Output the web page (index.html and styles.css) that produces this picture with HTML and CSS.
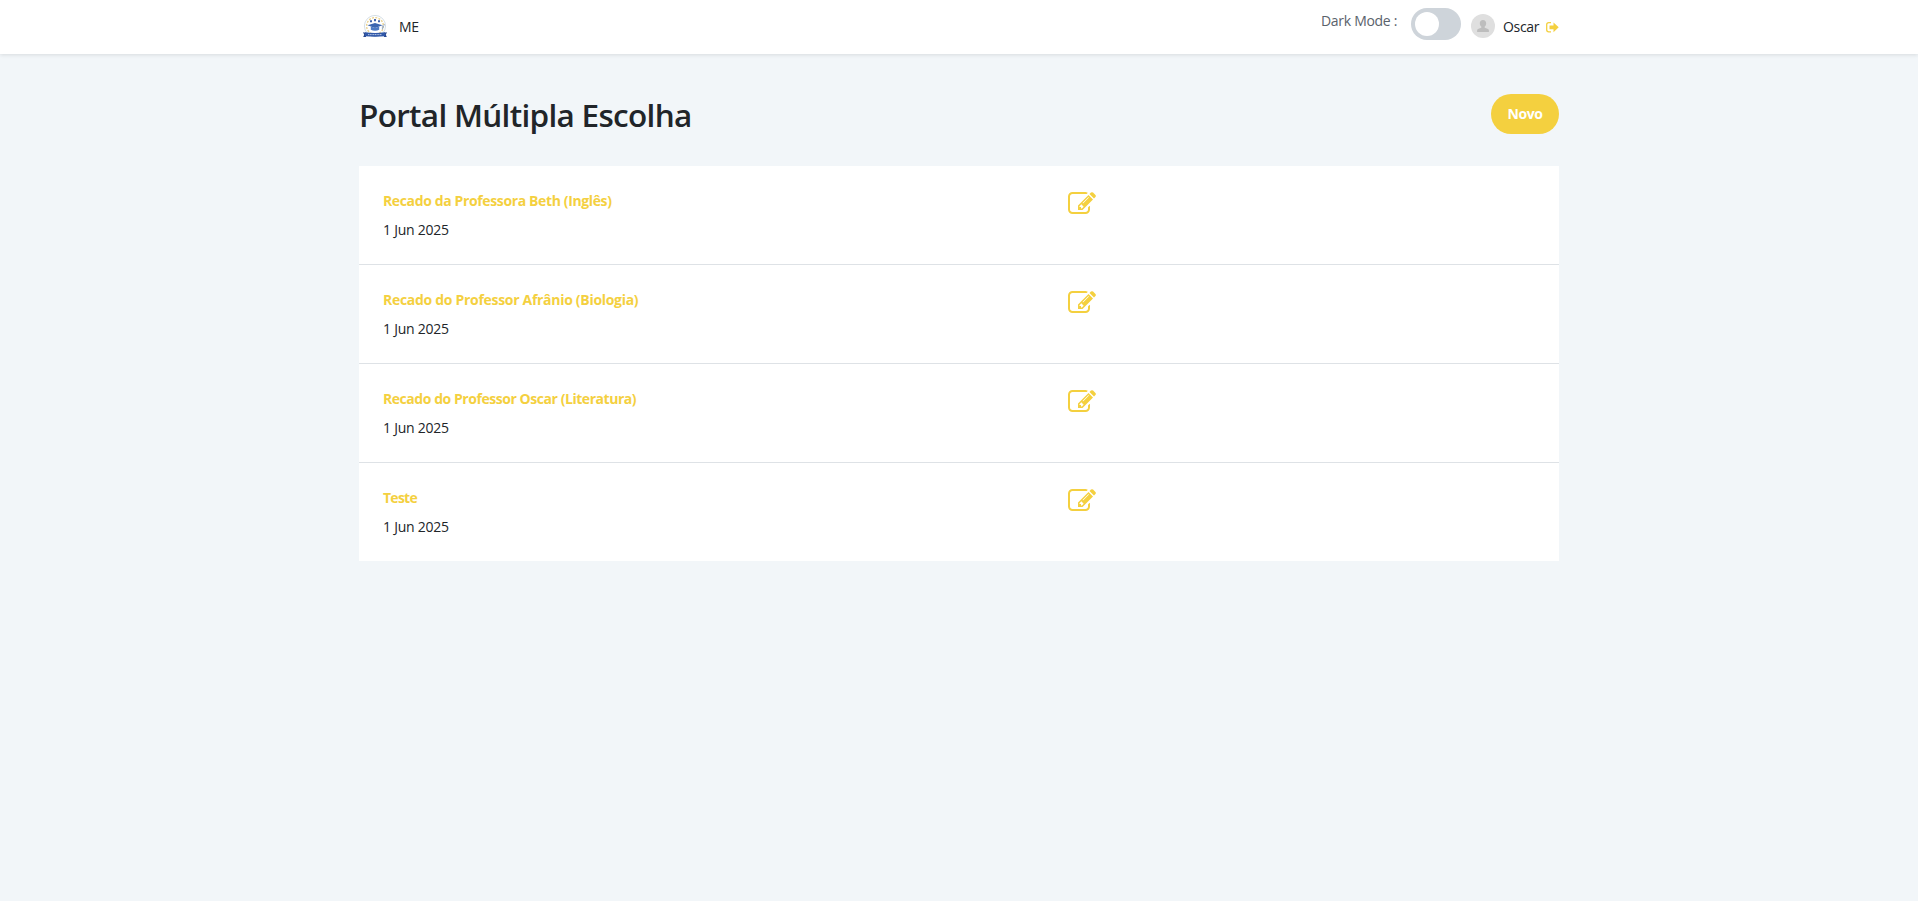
FILE: index.html
```html
<!DOCTYPE html>
<html lang="pt-BR">
<head>
<meta charset="utf-8">
<title>Portal Múltipla Escolha</title>
<link rel="stylesheet" href="styles.css">
</head>
<body>
<svg class="symbols" aria-hidden="true">
  <symbol id="edit" viewBox="0 0 1792 1792"><path d="M888 1184l116-116-152-152-116 116v56h96v96h56zm440-720q-16-16-33 1l-350 350q-17 17-1 33t33-1l350-350q17-17 1-33zm80 594v190q0 119-84.5 203.5t-203.5 84.5h-832q-119 0-203.5-84.5t-84.5-203.5v-832q0-119 84.5-203.5t203.5-84.5h832q63 0 117 25 15 7 18 23 3 17-9 29l-49 49q-14 14-32 8-23-6-45-6h-832q-66 0-113 47t-47 113v832q0 66 47 113t113 47h832q66 0 113-47t47-113v-126q0-13 9-22l64-64q15-15 35-7t20 29zm-96-738l288 288-672 672h-288v-288zm444 132l-92 92-288-288 92-92q28-28 68-28t68 28l152 152q28 28 28 68t-28 68z"/></symbol>
</svg>
<header class="topbar">
  <div class="container topbar-inner">
    <a class="brand">
      <svg class="logo" viewBox="0 0 24 22">
        <circle cx="12" cy="11" r="10.6" fill="#fff" stroke="#c9d6df" stroke-width=".8"/>
        <circle cx="12" cy="11" r="8.4" fill="none" stroke="#ead28f" stroke-width="1.4" stroke-dasharray="2 1.3"/>
        <path d="M4.5 10.2 12 8l7.5 2.2L12 13z" fill="#3c66b0"/>
        <path d="M7.8 11.6v3.2q4.2 2 8.4 0v-3.2L12 13z" fill="#4e7bc4"/>
        <path d="M7 5.2h2v2H7zM11 4h2v2.200h-2zM15 5.200h2v2h-2z" fill="#4265ad"/>
        <path d="M19.400 10.300v4.200M21.500 9l-2 5" stroke="#93a7c4" stroke-width=".8"/>
        <path d="M0 17.200l3 .6V22H.2l1-2.200zM24 17.200l-3 .6V22h2.800l-1-2.200z" fill="#29488e"/>
        <path d="M2 17.200q10 1.400 20 0v4q-10 .9-20 0z" fill="#3158a8"/>
        <path d="M5 19.600h14" stroke="#b7c7e6" stroke-width="1" stroke-dasharray="1.200 .5"/>
      </svg>
      <span class="brand-name">ME</span>
    </a>
    <div class="tools">
      <span class="mode-label">Dark Mode :</span>
      <span class="switch"><span class="knob"></span></span>
      <svg class="avatar" viewBox="0 0 24 24"><circle cx="12" cy="12" r="12" fill="#dfdfdf"/><path d="M12 5.900c-2 0-3.200 1.400-3.200 3.300 0 1.500.6 2.700 1.500 3.400v1.200c-1.600.5-4.200 1-4.200 2.600V18h11.800v-1.600c0-1.600-2.600-2.100-4.200-2.600v-1.200c.9-.7 1.500-1.900 1.500-3.400 0-1.900-1.200-3.300-3.200-3.300z" fill="#bdbdbd"/></svg>
      <span class="user">Oscar</span>
      <svg class="logout" viewBox="0 0 13 11"><path d="M5 .700H2.700Q.700.700.700 2.700v5.100q0 2 2 2H5" fill="none" stroke="#f4d03f" stroke-width="1.300"/><path d="M3.500 3.400h4V.4L12.700 5.300 7.500 10.200v-3h-4z" fill="#f4d03f"/></svg>
    </div>
  </div>
</header>
<main class="container">
  <div class="heading">
    <h1 class="title">Portal Múltipla Escolha</h1>
    <button class="new-btn">Novo</button>
  </div>
  <section class="list">
    <article class="row"><div class="info"><a class="name">Recado da Professora Beth (Inglês)</a><span class="date">1 Jun 2025</span></div><svg class="edit"><use href="#edit"/></svg></article>
    <article class="row"><div class="info"><a class="name name-biology">Recado do Professor Afrânio (Biologia)</a><span class="date">1 Jun 2025</span></div><svg class="edit"><use href="#edit"/></svg></article>
    <article class="row"><div class="info"><a class="name name-literature">Recado do Professor Oscar (Literatura)</a><span class="date">1 Jun 2025</span></div><svg class="edit"><use href="#edit"/></svg></article>
    <article class="row"><div class="info"><a class="name name-short">Teste</a><span class="date">1 Jun 2025</span></div><svg class="edit"><use href="#edit"/></svg></article>
  </section>
</main>
</body>
</html>
```
FILE: styles.css
```css
* { box-sizing: border-box; }
body { margin: 0; min-height: 901px; background: #f2f6f9; color: #212529; font: 14px/20px "Open Sans", "Noto Sans", sans-serif; }
.symbols { display: none; }
.container { width: 1200px; margin: 0 auto; }
.topbar { height: 54px; background: #fff; box-shadow: 0 1px 4px rgba(0,0,0,.11); }
.topbar-inner { display: flex; justify-content: space-between; }
.brand { display: flex; padding: 15px 0 0 4px; }
.logo { width: 24px; height: 22px; }
.brand-name { margin: 2px 0 0 12px; letter-spacing: -.4px; }
.tools { display: flex; align-items: flex-start; }
.mode-label { width: 90px; padding-top: 11px; color: #5a626b; letter-spacing: -.3px; white-space: nowrap; }
.switch { width: 50px; height: 32px; padding: 4px; border-radius: 16px; background: #ced4da; margin-top: 8px; }
.knob { display: block; width: 24px; height: 24px; border-radius: 50%; background: #fff; }
.avatar { width: 24px; height: 24px; margin: 14px 0 0 10px; }
.user { width: 43px; margin: 17px 0 0 8px; letter-spacing: -.3px; }
.logout { width: 13px; height: 11px; margin-top: 22px; }
.heading { display: flex; justify-content: space-between; height: 112px; padding-top: 40px; }
.title { margin: 0; padding-top: 1px; font-size: 31.5px; line-height: 40px; font-weight: 600; letter-spacing: -.7px; white-space: nowrap; }
.new-btn { width: 68px; height: 40px; padding: 0; border: 0; border-radius: 20px; background: #f4d03f; color: #fff; font: 700 14px/20px "Open Sans", sans-serif; letter-spacing: -.4px; }
.list { background: #fff; }
.row { display: flex; height: 99px; padding: 24px; border-bottom: 1px solid #dee2e6; }
.row:last-child { height: 98px; border-bottom: 0; }
.info { display: flex; flex-direction: column; width: 685px; }
.name { color: #f4d03f; font-weight: 700; line-height: 21px; margin-bottom: 8px; letter-spacing: -.37px; }
.name-biology { letter-spacing: -.3px; }
.name-literature { letter-spacing: -.45px; }
.name-short { letter-spacing: -.75px; }
.date { line-height: 21px; letter-spacing: -.25px; }
.edit { width: 28px; height: 28px; fill: #f4d03f; }
```
